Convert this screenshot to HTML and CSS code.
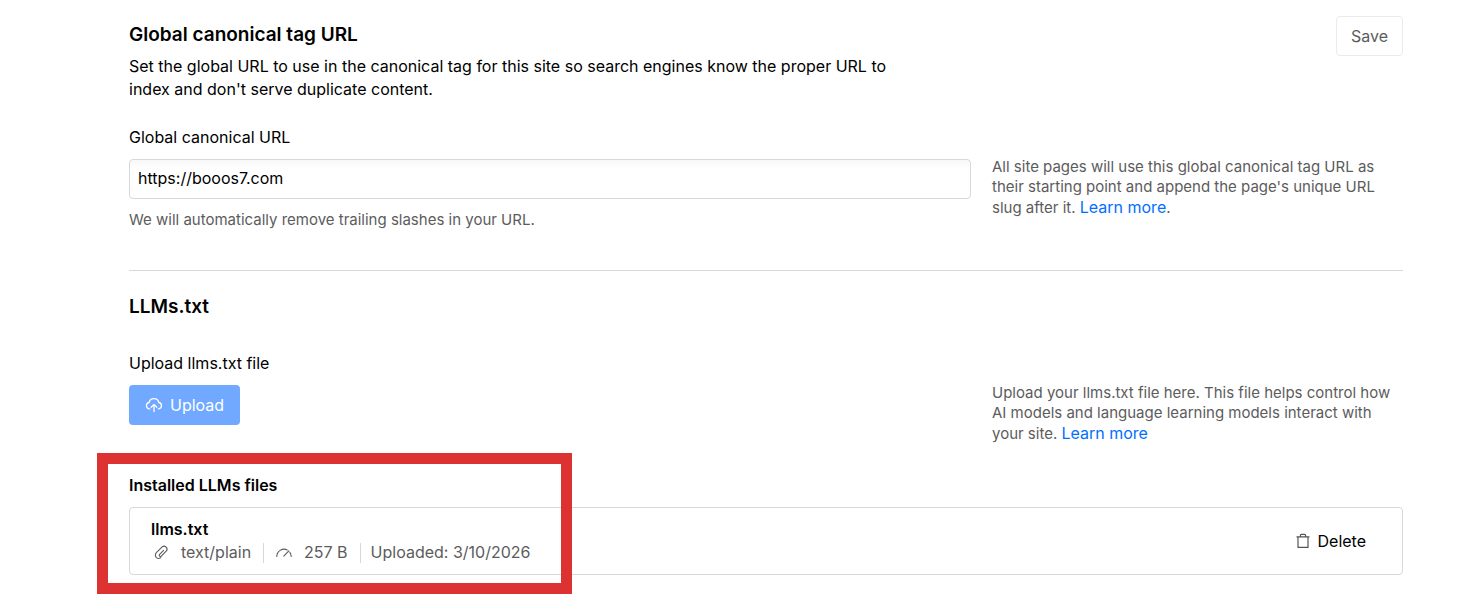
FILE: index.html
```html
<!DOCTYPE html>
<html lang="en">
<head>
    <meta charset="UTF-8">
    <meta name="viewport" content="width=device-width, initial-scale=1.0">
    <title>Site settings</title>
    <link rel="stylesheet" href="styles.css">
</head>
<body>
    <main class="settings">
        <!-- Canonical URL -->
        <section class="section canonical">
            <header class="section-header">
                <div class="section-intro">
                    <h2>Global canonical tag URL</h2>
                    <p>Set the global URL to use in the canonical tag for this site so search engines know the proper URL to index and don't serve duplicate content.</p>
                </div>
                <button type="button" class="btn btn-save">Save</button>
            </header>
            <div class="row">
                <div class="field">
                    <label for="canonical-url">Global canonical URL</label>
                    <input type="text" id="canonical-url" value="https://booos7.com">
                    <p class="hint">We will automatically remove trailing slashes in your URL.</p>
                </div>
                <p class="help">All site pages will use this global canonical tag URL as their starting point and append the page's unique URL slug after it. <a href="#">Learn more</a>.</p>
            </div>
        </section>

        <!-- LLMs.txt -->
        <section class="section llms">
            <h2>LLMs.txt</h2>
            <div class="row">
                <div class="field">
                    <label for="upload-btn">Upload llms.txt file</label>
                    <button type="button" id="upload-btn" class="btn btn-upload">
                        <svg width="18" height="16" viewBox="0 0 18 16" fill="none" stroke="currentColor" stroke-width="1.3" stroke-linecap="round" stroke-linejoin="round" aria-hidden="true">
                            <path d="M4.8 11.8H4.2A3.2 3.2 0 0 1 4 5.5A5.1 5.1 0 0 1 13.9 5.5A3.2 3.2 0 0 1 13.7 11.8H13.2"/>
                            <path d="M9 14.5V7.5M6.2 10.2L9 7.4L11.8 10.2"/>
                        </svg>
                        Upload
                    </button>
                </div>
                <p class="help">Upload your llms.txt file here. This file helps control how AI models and language learning models interact with your site. <a href="#">Learn more</a></p>
            </div>

            <div class="installed">
                <h3>Installed LLMs files</h3>
                <div class="file">
                    <div class="file-info">
                        <strong>llms.txt</strong>
                        <ul class="meta">
                            <li>
                                <svg width="20" height="18" viewBox="0 0 20 18" fill="none" stroke="currentColor" stroke-width="1.1" stroke-linecap="round" aria-hidden="true">
                                    <path d="M12.6 6.4L8.6 10.4A1.2 1.2 0 0 0 10.3 12.1L15.4 7A3 3 0 0 0 11.2 2.8L5.6 8.4A3.6 3.6 0 0 0 5.4 13.6A3.6 3.6 0 0 0 9.8 13.6"/>
                                </svg>
                                text/plain
                            </li>
                            <li>
                                <svg width="20" height="18" viewBox="0 0 20 18" fill="none" stroke="currentColor" stroke-width="1.1" stroke-linecap="round" aria-hidden="true">
                                    <path d="M2.8 12.5A7.3 7.3 0 0 1 13.2 5.9M15.8 8.2A7.3 7.3 0 0 1 17.2 12.5M9.8 12.2L14.8 6.8"/>
                                </svg>
                                257 B
                            </li>
                            <li>Uploaded: 3/10/2026</li>
                        </ul>
                    </div>
                    <button type="button" class="btn-delete">
                        <svg width="14" height="16" viewBox="0 0 14 16" fill="none" stroke="#555" stroke-width="1.2" stroke-linejoin="round" aria-hidden="true">
                            <path d="M0.5 3.8H13.5M2 3.8V14.4H12V3.8M4.4 3.6V2.4Q4.4 1.4 5.4 1.4H8.6Q9.6 1.4 9.6 2.4V3.6"/>
                        </svg>
                        Delete
                    </button>
                </div>
                <div class="highlight"></div>
            </div>
        </section>
    </main>
</body>
</html>
```
FILE: styles.css
```css
* {
    box-sizing: border-box;
}

body {
    margin: 0;
    background-color: #fff;
    color: #000;
    font-family: Inter, "Liberation Sans", sans-serif;
    font-size: 16px;
    line-height: 24px;
}

h2, h3, p, ul {
    margin: 0;
    padding: 0;
}

h2 {
    font-size: 19px;
    font-weight: 600;
}

h3 {
    font-size: 16px;
    font-weight: 600;
}

a {
    color: #006fff;
    font-size: 16px;
    text-decoration: none;
}

a:hover {
    text-decoration: underline;
}

button, input {
    font: inherit;
}

svg {
    flex: none;
}

.settings {
    padding: 16px 56px 32px 129px;
}

.canonical {
    padding-bottom: 39px;
    border-bottom: 1px solid #dadada;
}

.llms {
    padding-top: 24px;
}

.llms .row {
    margin-top: 32px;
}

.section-header {
    display: flex;
    justify-content: space-between;
    align-items: flex-start;
    margin-bottom: 24px;
}

.section-intro {
    max-width: 800px;
    padding-top: 7px;
}

.section-intro p {
    margin-top: 8px;
    line-height: 23px;
}

.row {
    display: grid;
    grid-template-columns: minmax(0, 1fr) 411px;
    gap: 21px;
}

.field {
    display: flex;
    flex-direction: column;
    align-items: flex-start;
    gap: 10px;
}

.field input {
    width: 100%;
    height: 40px;
    padding: 0 8px 2px;
    border: 1px solid #d8d8d8;
    border-radius: 4px;
    background: linear-gradient(#f8f8f8, #fff 10px);
    color: #000;
}

.hint, .help {
    color: #5c5c5c;
    font-size: 15px;
    line-height: 20px;
}

.hint {
    line-height: 22px;
}

.help {
    padding-top: 32px;
}

.btn {
    display: flex;
    align-items: center;
    height: 40px;
    border-radius: 4px;
    cursor: pointer;
}

.btn-save {
    padding: 0 14px;
    border: 1px solid #ebebeb;
    background-color: #fff;
    color: #5c5c5c;
}

.btn-upload {
    gap: 7px;
    padding: 0 16px;
    border: none;
    background-color: #70a9ff;
    color: #fff;
}

.installed {
    position: relative;
    margin-top: 29px;
}

.file {
    display: flex;
    justify-content: space-between;
    align-items: center;
    margin-top: 10px;
    padding: 10px 36px 10px 21px;
    border: 1px solid #d8d8d8;
    border-radius: 4px;
}

.file-info {
    line-height: 23px;
}

.file-info strong {
    font-weight: 600;
}

.meta {
    display: flex;
    list-style: none;
    color: #5c5c5c;
}

.meta li {
    display: flex;
    align-items: center;
    gap: 10px;
}

.meta li + li::before {
    content: "";
    width: 1px;
    height: 20px;
    margin-left: 12px;
    background-color: #d8d8d8;
}

.btn-delete {
    display: flex;
    align-items: center;
    gap: 8px;
    padding: 0;
    border: none;
    background: none;
    color: #000;
    cursor: pointer;
}

/* red frame over the installed file */
.highlight {
    position: absolute;
    top: -20px;
    left: -32px;
    width: 475px;
    height: 141px;
    border: 11px solid #dc3232;
    pointer-events: none;
}

@media (max-width: 900px) {
    .settings {
        padding-left: 56px;
    }

    .row {
        grid-template-columns: 1fr;
    }

    .help {
        padding-top: 0;
    }
}
```
